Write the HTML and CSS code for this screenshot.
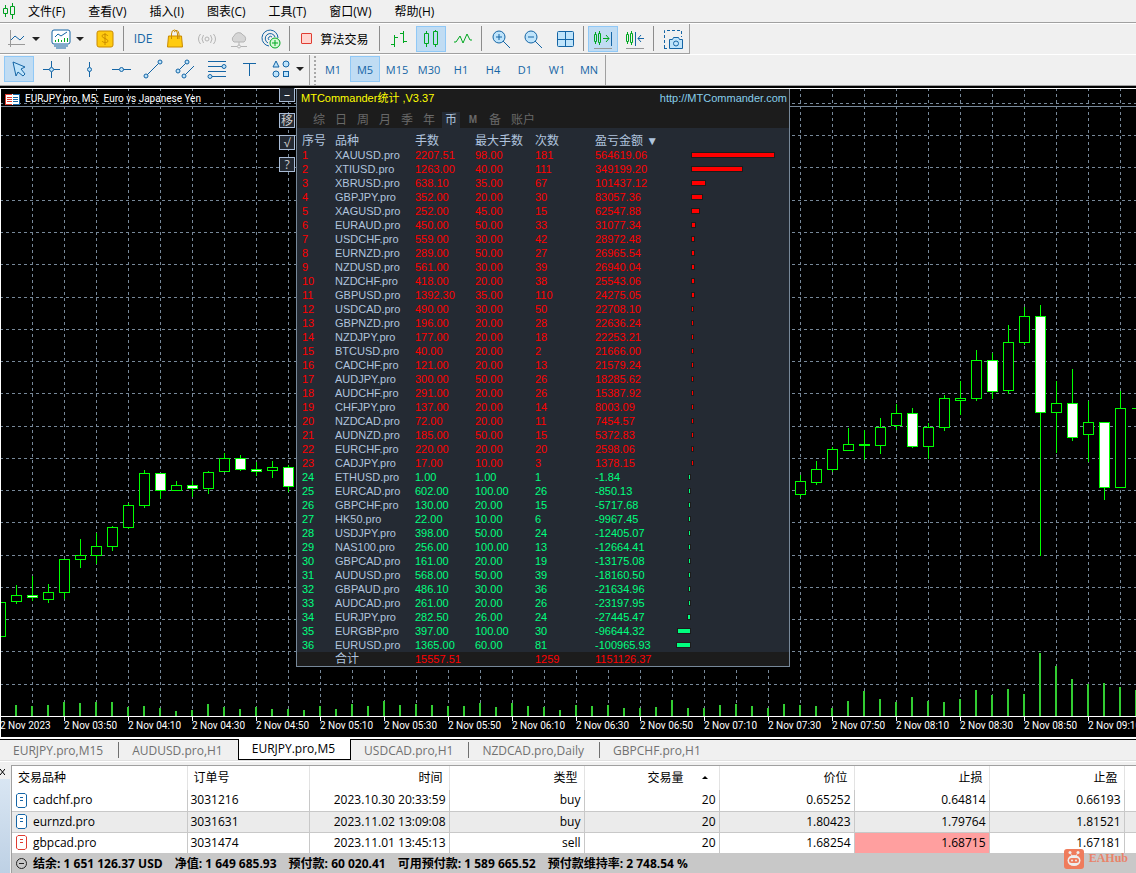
FILE: index.html
```html
<!DOCTYPE html>
<html lang="zh-CN">
<head>
  <meta charset="UTF-8">
  <meta name="viewport" content="width=device-width, initial-scale=1.0">
  <title>EURJPY.pro,M5</title>
  <link rel="stylesheet" href="styles.css">
</head>
<body>
<header>
  <nav class="menu">
    <svg class="logo" width="14" height="16" viewBox="0 0 14 16"><path d="M3.5 2v3M3.5 11v3M1.5 5.5h4v5h-4zM10.5 0v3M10.5 12v4M8.5 3.5h4v8h-4z"/></svg>
    <button>文件(F)</button>
    <button>查看(V)</button>
    <button>插入(I)</button>
    <button>图表(C)</button>
    <button>工具(T)</button>
    <button>窗口(W)</button>
    <button>帮助(H)</button>
  </nav>

  <div class="toolbar">
    <div class="bar standard">
      <button class="tool wide" aria-label="新图表">
        <svg width="20" height="20" viewBox="0 0 20 20"><path class="grey" d="M3.5 1v17M1 15.5h17"/><path class="blue" d="M4 11l4-4 5 4 4-4"/></svg>
        <i class="arrow"></i>
      </button>
      <button class="tool wide" aria-label="配置">
        <svg width="20" height="20" viewBox="0 0 20 20"><rect class="fill" x="1" y="1" width="18" height="14" rx="2"/><path class="blue" d="M3 17h14M5 19h10M4 8l3-3 3 2 6-4"/><path class="green" d="M4.500 13v-2M7.500 13v-3M10.500 13v-2M13.500 13v-4M16.500 13v-4"/></svg>
        <i class="arrow"></i>
      </button>
      <button class="tool" aria-label="账户">
        <svg width="20" height="20" viewBox="0 0 20 20"><rect class="gold" x="2" y="2" width="16" height="16" rx="2"/><path class="gold" d="M13 7c-1-2-6-2-6 0s6 3 6 5-5 2-6 0M10 4v12"/></svg>
      </button>
      <i class="sep"></i>
      <button class="tool ide">IDE</button>
      <button class="tool" aria-label="市场">
        <svg width="20" height="20" viewBox="0 0 20 20"><path class="gold" d="M3.500 7h13l1 11h-15z"/><path class="gold hollow" d="M6.500 10V5q0-4 3-4t3 4v5M9 3q4-4 5 2v5"/></svg>
      </button>
      <button class="tool" aria-label="信号">
        <svg width="20" height="20" viewBox="0 0 20 20"><g class="pale"><circle cx="10" cy="10" r="2"/><path d="M6.500 6q-3 4 0 8M13.500 6q3 4 0 8M3.500 5q-4 5 0 10M16.500 5q4 5 0 10"/></g></svg>
      </button>
      <button class="tool" aria-label="云">
        <svg width="20" height="20" viewBox="0 0 20 20"><g class="pale"><path class="cloud" d="M5 13a3.500 3.500 0 0 1 0-6 5 5 0 0 1 9-1 4 4 0 0 1 1 7z"/><path d="M10 13v3M2 17.500h6M12 17.500h6"/><circle cx="10" cy="17.500" r="1.500"/></g></svg>
      </button>
      <button class="tool" aria-label="VPS">
        <svg width="20" height="20" viewBox="0 0 20 20"><path class="blue" d="M8 17A8 8 0 1 1 17 9M7 14a5 5 0 1 1 7-6M8 11a2 2 0 1 1 3-3"/><circle class="plus" cx="14" cy="14" r="5"/><path class="green" d="M11 14h6M14 11v6"/></svg>
      </button>
      <i class="sep"></i>
      <button class="tool algo"><i class="stop"></i>算法交易</button>
      <i class="sep"></i>
      <button class="tool" aria-label="柱状图">
        <svg width="20" height="20" viewBox="0 0 20 20"><path class="green" d="M5.500 6v12M2 15.500h3M6 8.500h3M14.500 2v12M11 4.500h3M15 12.500h3"/></svg>
      </button>
      <button class="tool active" aria-label="蜡烛图">
        <svg width="20" height="20" viewBox="0 0 20 20"><path class="green" d="M5.500 2v2M5.500 15v3M3.500 4.500h4v10h-4zM14.500 1v1M14.500 16v2M12.500 2.500h4v13h-4z"/></svg>
      </button>
      <button class="tool" aria-label="线图">
        <svg width="20" height="20" viewBox="0 0 20 20"><path class="green" d="M1 13h2l4-6 3 7 4-9 3 6h2"/></svg>
      </button>
      <i class="sep"></i>
      <button class="tool" aria-label="放大">
        <svg width="20" height="20" viewBox="0 0 20 20"><circle class="glass" cx="8" cy="8" r="6"/><path class="blue" d="M12 12l7 7M5 8h6M8 5v6"/></svg>
      </button>
      <button class="tool" aria-label="缩小">
        <svg width="20" height="20" viewBox="0 0 20 20"><circle class="glass" cx="8" cy="8" r="6"/><path class="blue" d="M12 12l7 7M5 8h6"/></svg>
      </button>
      <button class="tool" aria-label="平铺窗口">
        <svg width="20" height="20" viewBox="0 0 20 20"><rect class="glass" x="2.500" y="2.500" width="16" height="15" rx="1"/><path class="blue" d="M10.500 2v16M2 10.500h17"/></svg>
      </button>
      <i class="sep"></i>
      <button class="tool active" aria-label="自动滚动">
        <svg width="20" height="20" viewBox="0 0 20 20"><path class="green" d="M2.500 3v3M2.500 12v3M1.500 5.500h2v7h-2zM6.500 2v2M6.500 13v3M5.500 4.500h2v9h-2zM10 9.500h6M13 6l3 3.500-3 3.500"/><path class="blue" d="M18.500 3v14"/><path class="grey" d="M1 19.500h18"/></svg>
      </button>
      <button class="tool" aria-label="图表平移">
        <svg width="20" height="20" viewBox="0 0 20 20"><path class="green" d="M2.500 3v3M2.500 12v3M1.500 5.500h2v7h-2zM6.500 2v2M6.500 13v3M5.500 4.500h2v9h-2z"/><path class="blue" d="M10.500 3v14M13 9.500h6M16 6l-3 3.500 3 3.500"/><path class="grey" d="M1 19.500h18"/></svg>
      </button>
      <i class="sep"></i>
      <button class="tool" aria-label="截图">
        <svg width="20" height="20" viewBox="0 0 20 20"><path class="blue dashed" d="M1.500 19V1.500h17V8M1 19.500h4"/><path class="glass" d="M6.500 10.500h3l1-2h5l1 2h3v9h-13z"/><circle class="glass" cx="13" cy="14.500" r="2.500"/></svg>
      </button>
    </div>
  </div>

  <div class="toolbar">
    <div class="bar objects">
      <button class="tool active" aria-label="光标">
        <svg width="20" height="20" viewBox="0 0 20 20"><path class="glass" d="M4 3l12 5-4 2 4 5-2 2-5-4-2 4z"/></svg>
      </button>
      <button class="tool" aria-label="十字准线">
        <svg width="20" height="20" viewBox="0 0 20 20"><path class="blue" d="M10.500 2v6M10.500 13v6M2 10.500h6M13 10.500h6"/><circle class="glass" cx="10.500" cy="10.500" r="2"/></svg>
      </button>
      <i class="sep"></i>
      <button class="tool" aria-label="垂直线">
        <svg width="20" height="20" viewBox="0 0 20 20"><path class="blue" d="M10.500 3v5M10.500 12v6"/><circle class="glass" cx="10.500" cy="10.500" r="2"/></svg>
      </button>
      <button class="tool" aria-label="水平线">
        <svg width="20" height="20" viewBox="0 0 20 20"><path class="blue" d="M1 10.500h7M12 10.500h8"/><circle class="glass" cx="10.500" cy="10.500" r="2"/></svg>
      </button>
      <button class="tool" aria-label="趋势线">
        <svg width="20" height="20" viewBox="0 0 20 20"><path class="blue" d="M4 16L16 4"/><circle class="glass" cx="3" cy="17" r="2"/><circle class="glass" cx="17" cy="3" r="2"/></svg>
      </button>
      <button class="tool" aria-label="通道">
        <svg width="20" height="20" viewBox="0 0 20 20"><path class="blue" d="M4 11l7-7M10 16l9-9"/><circle class="glass" cx="3" cy="12" r="2"/><circle class="glass" cx="12" cy="3" r="2"/><circle class="glass" cx="9" cy="17" r="2"/></svg>
      </button>
      <button class="tool" aria-label="斐波那契">
        <svg width="20" height="20" viewBox="0 0 20 20"><path class="blue" d="M1 2.500h18M1 7.500h14M1 12.500h18M5 17.500h14"/><circle class="glass" cx="17" cy="7.500" r="2"/><circle class="glass" cx="3" cy="17.500" r="2"/></svg>
      </button>
      <button class="tool" aria-label="文本">
        <svg width="20" height="20" viewBox="0 0 20 20"><path class="blue" d="M4 4.500h13M10.500 4v13"/></svg>
      </button>
      <button class="tool wide" aria-label="图形">
        <svg width="20" height="20" viewBox="0 0 20 20"><path class="glass" d="M5 2l3 6H2z"/><circle class="glass" cx="15" cy="5" r="3"/><circle class="glass" cx="5" cy="15" r="3"/><rect class="glass" x="12.500" y="12.500" width="5" height="5"/></svg>
        <i class="arrow"></i>
      </button>
    </div>
    <div class="bar periods">
      <button class="tool">M1</button>
      <button class="tool active">M5</button>
      <button class="tool">M15</button>
      <button class="tool">M30</button>
      <button class="tool">H1</button>
      <button class="tool">H4</button>
      <button class="tool">D1</button>
      <button class="tool">W1</button>
      <button class="tool">MN</button>
    </div>
  </div>
</header>

<main class="chart">
  <svg id="plot" class="plot"></svg>
  <div class="symbol">
    <svg width="15" height="11" viewBox="0 0 15 11"><path fill="#fff" d="M0 0h15v11H0z"/><path stroke="#e03c31" d="M0 .5h7M2 3.500h5M2 5.500h5M2 7.500h5M0 10.500h7M.5 0v11"/><path stroke="#1565a5" d="M8 .5h7M8 3.500h5M8 5.500h5M8 7.500h5M8 10.500h7M14.500 0v11"/></svg>
    <span>EURJPY.pro, M5:&nbsp; Euro vs Japanese Yen</span>
  </div>

  <div class="side">
    <button class="minimize">–</button>
    <button>移</button>
    <button>√</button>
    <button>?</button>
  </div>

  <section class="panel">
    <div class="panel-top">
      <div class="panel-title">
        <span>MTCommander统计 ,V3.37</span>
        <a href="http://MTCommander.com">http://MTCommander.com</a>
      </div>
      <div class="views">
        <button>综</button>
        <button>日</button>
        <button>周</button>
        <button>月</button>
        <button>季</button>
        <button>年</button>
        <button class="active">币</button>
        <button class="letter">M</button>
        <button>备</button>
        <button class="account">账户</button>
      </div>
    </div>
    <table class="stats">
      <colgroup>
        <col class="c-no"><col class="c-name"><col class="c-num"><col class="c-num"><col class="c-num"><col class="c-sum"><col class="c-loss"><col>
      </colgroup>
      <thead>
        <tr><th>序号</th><th>品种</th><th>手数</th><th>最大手数</th><th>次数</th><th>盈亏金额 ▼</th><th></th><th></th></tr>
      </thead>
      <tbody id="rows"></tbody>
      <tfoot>
        <tr><td></td><td class="name">合计</td><td>15557.51</td><td></td><td>1259</td><td>1151126.37</td><td></td><td></td></tr>
      </tfoot>
    </table>
  </section>
</main>

<nav class="tabs">
  <button>EURJPY.pro,M15</button>
  <button>AUDUSD.pro,H1</button>
  <button class="active">EURJPY.pro,M5</button>
  <button>USDCAD.pro,H1</button>
  <button>NZDCAD.pro,Daily</button>
  <button>GBPCHF.pro,H1</button>
</nav>

<section class="terminal">
  <div class="handle">
    <button aria-label="关闭"><svg width="5" height="6" viewBox="0 0 5 6"><path d="M0 0l5 6M5 0L0 6"/></svg></button>
  </div>
  <div class="trade">
    <table class="orders">
      <colgroup>
        <col class="o-symbol"><col class="o-ticket"><col class="o-time"><col class="o-val"><col class="o-val"><col class="o-val"><col class="o-val"><col class="o-val"><col>
      </colgroup>
      <thead>
        <tr><th>交易品种</th><th>订单号</th><th>时间</th><th>类型</th><th class="sorted">交易量</th><th>价位</th><th>止损</th><th>止盈</th><th></th></tr>
      </thead>
      <tbody>
        <tr><td><svg class="doc" width="11" height="15" viewBox="0 0 11 15"><path d="M2 .5h7l1.500 1.500v11l-1.500 1.500H2L.5 13V2zM4 4.500h3M4 7.500h3"/></svg>cadchf.pro</td><td>3031216</td><td>2023.10.30 20:33:59</td><td>buy</td><td>20</td><td>0.65252</td><td>0.64814</td><td>0.66193</td><td></td></tr>
        <tr><td><svg class="doc" width="11" height="15" viewBox="0 0 11 15"><path d="M2 .5h7l1.500 1.500v11l-1.500 1.500H2L.5 13V2zM4 4.500h3M4 7.500h3"/></svg>eurnzd.pro</td><td>3031631</td><td>2023.11.02 13:09:08</td><td>buy</td><td>20</td><td>1.80423</td><td>1.79764</td><td>1.81521</td><td></td></tr>
        <tr><td><svg class="doc sell" width="11" height="15" viewBox="0 0 11 15"><path d="M2 .5h7l1.500 1.500v11l-1.500 1.500H2L.5 13V2zM4 4.500h3M4 7.500h3"/></svg>gbpcad.pro</td><td>3031474</td><td>2023.11.01 13:45:13</td><td>sell</td><td>20</td><td>1.68254</td><td class="near">1.68715</td><td>1.67181</td><td></td></tr>
      </tbody>
    </table>
    <div class="balance">
      <svg width="11" height="11" viewBox="0 0 11 11"><circle cx="5.500" cy="5.500" r="5"/><path d="M3 5.500h5"/></svg>
      <span>结余: 1 651 126.37 USD</span>
      <span>净值: 1 649 685.93</span>
      <span>预付款: 60 020.41</span>
      <span>可用预付款: 1 589 665.52</span>
      <span>预付款维持率: 2 748.54 %</span>
    </div>
  </div>
  <div class="watermark">
    <svg width="20" height="20" viewBox="0 0 20 20"><rect width="20" height="20" rx="3"/><g fill="#eee"><ellipse cx="10" cy="11.500" rx="6.500" ry="5.500"/><circle cx="6" cy="3.500" r="1.500"/><circle cx="14" cy="3.500" r="1.500"/><path d="M6 4l2 4h4l2-4-3 3H9z"/></g><rect x="5" y="9" width="10" height="5" rx="2.500"/><circle cx="8" cy="11.500" r="1" fill="#eee"/><circle cx="12" cy="11.500" r="1" fill="#eee"/></svg>
    <span>EAHub</span>
  </div>
</section>
<script src="chart.js"></script>
</body>
</html>
```
FILE: styles.css
```css
* {
  box-sizing: border-box;
}
body {
  margin: 0;
  min-height: 100vh;
  display: flex;
  flex-direction: column;
  background: #f0f0f0;
  color: #000;
  font-family: "Open Sans", "Noto Sans CJK SC", sans-serif;
  font-size: 12px;
  overflow-x: hidden;
}
button {
  margin: 0;
  padding: 0;
  border: 0;
  background: none;
  color: inherit;
  font: inherit;
  white-space: nowrap;
}
svg {
  flex: none;
  fill: none;
}
table {
  width: 100%;
  table-layout: fixed;
  border-collapse: collapse;
}
th {
  font-weight: normal;
}

/* menu */
.menu {
  display: flex;
  align-items: center;
  gap: 23px;
  height: 24px;
  padding: 0 0 1px 2px;
  border-bottom: 1px solid #fff;
  box-shadow: inset 0 -1px #a0a0a0;
}
.logo {
  margin-right: -11px;
  stroke: #00a020;
}

/* toolbars */
.toolbar {
  display: flex;
  height: 31px;
  border-bottom: 1px solid #fff;
}
.toolbar:last-child {
  height: 30px;
  border-bottom: 0;
}
.bar {
  display: flex;
  align-items: center;
  border-right: 1px solid #a0a0a0;
}
.standard {
  padding-left: 1px;
  border-bottom: 1px solid #a0a0a0;
}
.objects {
  padding: 0 0 2px 3px;
}
.periods {
  padding: 0 0 2px 7px;
  background: radial-gradient(circle, #a8a8a8 1px, transparent 1px) 3px 0 / 4px 4px repeat-y;
}
.tool {
  display: flex;
  align-items: center;
  justify-content: center;
  width: 30px;
  height: 26px;
  margin: 0 1px;
  color: #1565a5;
  font-size: 11px;
}
.tool.wide {
  width: 42px;
  gap: 5px;
}
.tool.active {
  background: #c0dcf3;
  border: 1px solid #90c8f6;
}
.tool.algo {
  width: 82px;
  gap: 8px;
  color: #000;
  font-size: 12px;
}
.stop {
  width: 11px;
  height: 11px;
  border: 1px solid #e03c31;
  border-radius: 1px;
  background: #ffd5d0;
}
.arrow {
  border: 4px solid transparent;
  border-top-color: #222;
  border-bottom: 0;
}
.sep {
  width: 1px;
  height: 25px;
  margin: 0 3px 0 2px;
  background: #8c8c8c;
}
.blue, .glass, .fill {
  stroke: #1565a5;
}
.glass {
  fill: #bfe4fb;
}
.fill {
  fill: #fff;
}
.green {
  stroke: #00a820;
}
.grey {
  stroke: #999;
}
.gold {
  fill: #ffcb0f;
  stroke: #c98a00;
}
.hollow {
  fill: none;
}
.pale {
  stroke: #b4b4b4;
}
.cloud {
  fill: #d6d6d6;
}
.plus {
  fill: #d8f8d8;
  stroke: #00a820;
}
.dashed {
  stroke-dasharray: 3 2;
}
.tool.ide {
  font-size: 12px;
}

/* chart */
.chart {
  position: relative;
  height: 653px;
  border-top: 2px solid #000;
  border-bottom: 2px solid #fff;
  background: #000;
  box-shadow: 0 -1px #a0a0a0;
  margin-top: 1px;
  overflow: hidden;
}
.plot {
  display: block;
  width: 100%;
  height: 649px;
  border-top: 1px solid #fff;
  border-left: 1px solid #fff;
}
.grid {
  stroke: #778899;
  stroke-dasharray: 3 3;
  shape-rendering: crispEdges;
}
.price {
  stroke: #778899;
}
.volume {
  fill: #32cd32;
}
.candle {
  fill: #000;
  stroke: #0f0;
  shape-rendering: crispEdges;
}
.candle.down {
  fill: #fff;
}
.axis {
  stroke: #fff;
  shape-rendering: crispEdges;
}
.time {
  fill: #fff;
  font: 10px Roboto, sans-serif;
}
.symbol {
  position: absolute;
  top: 3px;
  left: 5px;
  display: flex;
  align-items: center;
  gap: 5px;
  color: #fff;
  font: 10px/16px Roboto, sans-serif;
}
.side {
  position: absolute;
  top: 0;
  left: 279px;
  display: flex;
  flex-direction: column;
  gap: 7px;
}
.side button {
  width: 16px;
  height: 15px;
  border: 1px solid #a9bcd6;
  background: #242a33;
  color: #ccc;
  font-size: 12px;
  line-height: 12px;
}
.side .minimize {
  height: 14px;
  margin-bottom: 4px;
  border-top: 0;
  color: #fff;
}

/* statistics window */
.panel {
  position: absolute;
  top: 1px;
  left: 296px;
  width: 494px;
  border: 1px solid #778899;
  border-top: 0;
  background: #242a33;
  color: #b0c4de;
  font-family: "Liberation Sans", "Noto Sans CJK SC", sans-serif;
  font-size: 11px;
}
.panel-top {
  height: 39px;
  background: #1c1c1c;
}
.panel-title {
  display: flex;
  justify-content: space-between;
  padding: 0 2px 0 4px;
  line-height: 18px;
  color: #ff0;
}
.panel-title a {
  color: #87ceeb;
  text-decoration: none;
}
.views {
  display: flex;
  padding-left: 11px;
  color: #696969;
  font-size: 12px;
}
.views button {
  width: 18px;
  height: 16px;
  margin: 5px 2px 0;
  line-height: 16px;
}
.views .active {
  background: #242a33;
  color: #b0c4de;
}
.views .letter {
  font-size: 10px;
  font-weight: bold;
}
.views .account {
  width: 30px;
}
.stats {
  line-height: 14px;
  text-align: left;
}
.stats th {
  height: 20px;
  padding: 6px 0 0;
  font-size: 12px;
  line-height: 14px;
  white-space: nowrap;
}
.stats td {
  height: 14px;
  padding: 0;
}
.stats th:first-child, .stats td:first-child {
  padding-left: 5px;
}
.c-no { width: 38px; }
.c-name { width: 80px; }
.c-num { width: 60px; }
.c-sum { width: 66px; }
.c-loss { width: 30px; }
.gain td, .stats tfoot td {
  color: #f00;
}
.loss td {
  color: #00ff7f;
}
.stats .name {
  color: #b0c4de;
}
.stats tfoot {
  background: #1c1c1c;
}
.stats tfoot .name {
  font-size: 12px;
}
.amount {
  display: block;
  box-sizing: content-box;
  height: 4px;
  border: 1px solid #1c1c1c;
  background: #f00;
}
.loss .amount {
  margin-left: auto;
  background: #00ff7f;
}

/* chart tabs */
.tabs {
  display: flex;
  align-items: flex-start;
  height: 23px;
  border-top: 1px solid #000;
  border-bottom: 1px solid #fff;
  box-shadow: inset 0 -1px #e0e0e0;
  color: #707070;
}
.tabs button {
  height: 16px;
  margin-top: 2px;
  padding: 0 15px 0 13px;
  border-right: 1px solid #707070;
  line-height: 18px;
}
.tabs button:last-child {
  border: 0;
}
.tabs .active {
  height: 21px;
  margin: -1px 0 0 -1px;
  border: 1px solid #000;
  border-top: 0;
  background: #fff;
  color: #000;
}

/* terminal */
.terminal {
  position: relative;
  display: flex;
  flex: 1;
}
.handle {
  width: 10px;
  margin-right: 1px;
  background: linear-gradient(#f0f0f0 17px, #d9e6f3 17px, #bdd0e4);
}
.handle button {
  display: block;
  height: 17px;
}
.handle path {
  stroke: #000;
}
.trade {
  flex: 1;
  display: flex;
  flex-direction: column;
  margin-top: 3px;
  border-top: 1px solid #a0a0a0;
  border-left: 1px solid #a0a0a0;
  background: #fff;
}
.orders {
  text-align: right;
}
.orders th {
  height: 24px;
  padding: 0 6px 2px;
  border-right: 1px solid #e3e3e3;
}
.orders td {
  height: 21px;
  padding: 0 3px;
  border-right: 1px solid #c8c8c8;
  border-bottom: 1px solid #c8c8c8;
  line-height: 20px;
  white-space: nowrap;
}
.orders th:nth-child(-n+2), .orders td:nth-child(-n+2) {
  text-align: left;
}
.orders th:last-child, .orders td:last-child {
  border-right: 0;
}
.orders tbody tr:nth-child(2) {
  background: #ebebeb;
}
.orders .near {
  background: #ff9f9f;
}
.orders .sorted::after {
  content: "";
  display: inline-block;
  margin: 0 5px 3px 18px;
  border: 3px solid transparent;
  border-top: 0;
  border-bottom-color: #000;
}
.o-symbol { width: 175px; }
.o-ticket { width: 122px; }
.o-time { width: 140px; }
.o-val { width: 135px; }
.doc {
  margin: -2px 6px 0 1px;
  vertical-align: middle;
  fill: #fff;
  stroke: #1565a5;
}
.doc.sell {
  stroke: #e03c31;
}
.balance {
  display: flex;
  flex: 1;
  align-items: center;
  gap: 12px;
  min-height: 21px;
  padding: 0 0 2px 4px;
  background: #c8c8c8;
  font-weight: bold;
  white-space: nowrap;
}
.balance svg {
  margin-right: -6px;
  stroke: #222;
}
.watermark {
  position: absolute;
  right: 8px;
  bottom: 6px;
  display: flex;
  align-items: center;
  gap: 5px;
  color: #e8836a;
  font: bold 12px "Liberation Serif", serif;
}
.watermark svg {
  fill: #ef7c5c;
}
```
FILE: chart.js
```js
// x, high, top, bottom, low, down
const candles = [
  [0, 602, 602, 636, 636], [16, 585, 595, 601, 603], [32, 576, 595, 597, 600, 1],
  [48, 584, 592, 599, 602], [64, 559, 559, 592, 598], [80, 539, 555, 559, 567],
  [96, 533, 546, 555, 563], [112, 526, 527, 546, 550], [128, 503, 505, 527, 528],
  [144, 470, 473, 505, 507], [160, 473, 473, 490, 498, 1], [176, 481, 485, 490, 490],
  [192, 481, 485, 488, 496, 1], [208, 471, 472, 488, 493], [224, 453, 458, 471, 471],
  [240, 455, 458, 469, 470, 1], [256, 462, 469, 471, 475, 1], [272, 461, 467, 470, 477],
  [288, 465, 467, 486, 491, 1],
  [800, 475, 481, 494, 496], [816, 461, 469, 482, 484], [832, 447, 449, 469, 471],
  [848, 428, 444, 450, 450], [864, 430, 444, 445, 459], [880, 418, 427, 445, 453],
  [896, 404, 413, 425, 429], [912, 408, 413, 446, 447, 1], [928, 423, 427, 446, 458],
  [944, 395, 398, 427, 430], [960, 381, 398, 400, 414], [976, 350, 360, 398, 400],
  [992, 353, 360, 391, 398, 1], [1008, 325, 342, 390, 393], [1024, 307, 316, 342, 344],
  [1040, 305, 316, 412, 555, 1], [1056, 381, 403, 412, 452], [1072, 369, 403, 437, 440, 1],
  [1088, 401, 422, 434, 461], [1104, 422, 422, 487, 499, 1], [1120, 391, 408, 487, 487],
  [1136, 408, 408, 408, 408]
];

const volumes = [
  11, 10, 11, 14, 13, 14, 14, 9, 10, 8, 5, 6, 12, 9, 7, 9, 7, 7,
  6, 10, 7, 12, 10, 15, 11, 12, 11, 10, 10, 13, 9, 13, 10, 9, 6, 11, 10, 11, 8, 8, 9, 16, 8, 8, 11, 12, 10, 8, 12,
  11, 10, 8, 15, 25, 17, 14, 19, 15, 14, 17, 26, 21, 27, 22, 63, 50, 37, 32, 33, 29, 26
];

const times = [
  '2023', '03:50', '04:10', '04:30', '04:50', '05:10', '05:30', '05:50', '06:10',
  '06:30', '06:50', '07:10', '07:30', '07:50', '08:10', '08:30', '08:50', '09:10'
];

let out = '';
for (let x = 32; x <= 1136; x += 32) {
  out += `<path class="grid" d="M${x + 0.5} 88V716"/>`;
}
for (let i = 0; i < 19; i++) {
  const y = Math.round(102.9 + i * 32.27);
  out += `<path class="grid" d="M0 ${y + 0.5}H4000"/>`;
}
out += '<path class="price" d="M0 106.5H4000"/>';
volumes.forEach((v, i) => {
  out += `<rect class="volume" x="${i * 16 + 15}" y="${716 - v}" width="2" height="${v}"/>`;
});
candles.forEach(([x, high, top, bottom, low, down]) => {
  const c = x + 0.5;
  out += `<path class="candle" d="M${c} ${high}V${low + 1}"/>`;
  out += `<path class="candle${down ? ' down' : ''}" d="M${c - 5} ${top + 0.5}h10V${bottom + 0.5}h-10z"/>`;
});
out += '<path class="axis" d="M0 716.5H4000"/>';
times.forEach((t, i) => {
  out += `<path class="axis" d="M${i * 64 + 0.5} 717v4"/>`;
  out += `<text class="time" x="${i * 64}" y="729">2 Nov ${t}</text>`;
});
document.getElementById('plot').innerHTML = `<g transform="translate(-1 -89)">${out}</g>`;

// symbol, lots, max lots, trades, profit
const stats = [
  ['XAUUSD', '2207.51', '98.00', 181, '564619.06'],
  ['XTIUSD', '1263.00', '40.00', 111, '349199.20'],
  ['XBRUSD', '638.10', '35.00', 67, '101437.12'],
  ['GBPJPY', '352.00', '20.00', 30, '83057.36'],
  ['XAGUSD', '252.00', '45.00', 15, '62547.88'],
  ['EURAUD', '450.00', '50.00', 33, '31077.34'],
  ['USDCHF', '559.00', '30.00', 42, '28972.48'],
  ['EURNZD', '289.00', '50.00', 27, '26965.54'],
  ['NZDUSD', '561.00', '30.00', 39, '26940.04'],
  ['NZDCHF', '418.00', '20.00', 38, '25543.06'],
  ['GBPUSD', '1392.30', '35.00', 110, '24275.05'],
  ['USDCAD', '490.00', '30.00', 50, '22708.10'],
  ['GBPNZD', '196.00', '20.00', 28, '22636.24'],
  ['NZDJPY', '177.00', '20.00', 18, '22253.21'],
  ['BTCUSD', '40.00', '20.00', 2, '21666.00'],
  ['CADCHF', '121.00', '20.00', 13, '21579.24'],
  ['AUDJPY', '300.00', '50.00', 26, '18285.62'],
  ['AUDCHF', '291.00', '20.00', 26, '15387.92'],
  ['CHFJPY', '137.00', '20.00', 14, '8003.09'],
  ['NZDCAD', '72.00', '20.00', 11, '7454.57'],
  ['AUDNZD', '185.00', '50.00', 15, '5372.83'],
  ['EURCHF', '220.00', '20.00', 20, '2598.06'],
  ['CADJPY', '17.00', '10.00', 3, '1378.15'],
  ['ETHUSD', '1.00', '1.00', 1, '-1.84'],
  ['EURCAD', '602.00', '100.00', 26, '-850.13'],
  ['GBPCHF', '130.00', '20.00', 15, '-5717.68'],
  ['HK50', '22.00', '10.00', 6, '-9967.45'],
  ['USDJPY', '398.00', '50.00', 24, '-12405.07'],
  ['NAS100', '256.00', '100.00', 13, '-12664.41'],
  ['GBPCAD', '161.00', '20.00', 19, '-13175.08'],
  ['AUDUSD', '568.00', '50.00', 39, '-18160.50'],
  ['GBPAUD', '486.10', '30.00', 36, '-21634.96'],
  ['AUDCAD', '261.00', '20.00', 26, '-23197.95'],
  ['EURJPY', '282.50', '26.00', 24, '-27445.47'],
  ['EURGBP', '397.00', '100.00', 30, '-96644.32'],
  ['EURUSD', '1365.00', '60.00', 81, '-100965.93']
];

document.getElementById('rows').innerHTML = stats.map(([name, lots, max, count, sum], i) => {
  const gain = sum > 0;
  const width = Math.max(1, Math.round(Math.abs(sum) / 6750) - 2);
  const bar = `<span class="amount" style="width:${width}px"></span>`;
  return `<tr class="${gain ? 'gain' : 'loss'}">
    <td>${i + 1}</td><td class="name">${name}.pro</td><td>${lots}</td><td>${max}</td><td>${count}</td><td>${sum}</td>
    <td>${gain ? '' : bar}</td><td>${gain ? bar : ''}</td></tr>`;
}).join('');
```
